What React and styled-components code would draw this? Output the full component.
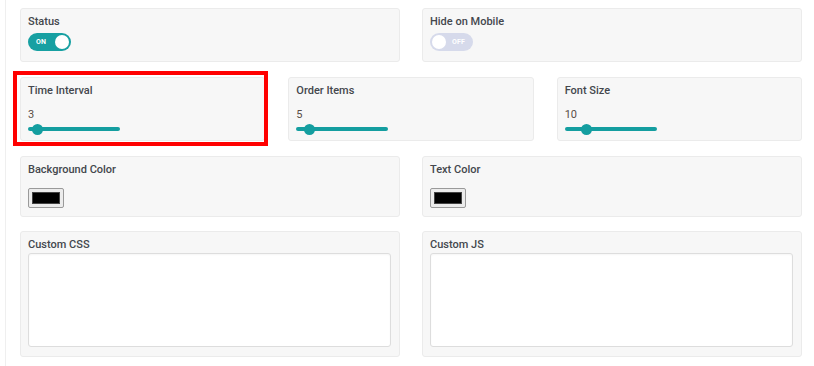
import styled, { createGlobalStyle } from 'styled-components';

const GlobalStyle = createGlobalStyle`
  body {
    margin: 0;
    background: #ffffff;
    font-family: 'Roboto', 'Liberation Sans', sans-serif;
  }
`;

const SLIDER_MAX = 50;

function Toggle({ on }) {
  return (
    <ToggleTrack $on={on}>
      <ToggleText $on={on}>{on ? 'ON' : 'OFF'}</ToggleText>
      <ToggleKnob $on={on} />
    </ToggleTrack>
  );
}

function Slider({ value }) {
  const left = 5 + (value / SLIDER_MAX) * 82;
  return (
    <SliderTrack>
      <SliderThumb style={{ left: `${left}px` }} />
    </SliderTrack>
  );
}

export default function App() {
  return (
    <>
      <GlobalStyle />
      <Page>
        <Row $cols={2}>
          <Card $pb={10}>
            <Label>Status</Label>
            <Toggle on />
          </Card>
          <Card $pb={10}>
            <Label>Hide on Mobile</Label>
            <Toggle on={false} />
          </Card>
        </Row>

        <Row $cols={3}>
          <Card $pb={6} $highlight>
            <Label>Time Interval</Label>
            <Value>3</Value>
            <Slider value={3} />
          </Card>
          <Card $pb={6}>
            <Label>Order Items</Label>
            <Value>5</Value>
            <Slider value={5} />
          </Card>
          <Card $pb={6}>
            <Label>Font Size</Label>
            <Value>10</Value>
            <Slider value={10} />
          </Card>
        </Row>

        <Row $cols={2}>
          <Card $pb={8}>
            <Label>Background Color</Label>
            <Swatch>
              <SwatchColor $color="#000000" />
            </Swatch>
          </Card>
          <Card $pb={8}>
            <Label>Text Color</Label>
            <Swatch>
              <SwatchColor $color="#000000" />
            </Swatch>
          </Card>
        </Row>

        <Row $cols={2} $tight>
          <Card $pb={9}>
            <Label>Custom CSS</Label>
            <CodeArea />
          </Card>
          <Card $pb={9}>
            <Label>Custom JS</Label>
            <CodeArea />
          </Card>
        </Row>
      </Page>
    </>
  );
}

const Page = styled.div`
  margin-left: 5px;
  border-left: 1px solid #efefef;
  padding: 8px 12px 9px 14px;
  min-height: 349px;
  display: flex;
  flex-direction: column;
  gap: 15px;
`;

const Row = styled.div`
  display: grid;
  grid-template-columns: repeat(${(p) => p.$cols}, 1fr);
  column-gap: ${(p) => (p.$cols === 3 ? '23px' : '22px')};
  margin-top: ${(p) => (p.$tight ? '-1px' : '0')};
`;

const Card = styled.div`
  position: relative;
  background: #f7f7f7;
  border: 1px solid #ebebeb;
  border-radius: 3px;
  padding: 7px 8px ${(p) => p.$pb}px 7px;
  display: flex;
  flex-direction: column;
  align-items: flex-start;

  ${(p) =>
    p.$highlight &&
    `
    &::after {
      content: '';
      position: absolute;
      left: -8px;
      top: -7px;
      right: -4px;
      bottom: -6px;
      border: 4px solid #ff0000;
      pointer-events: none;
    }
  `}
`;

const Label = styled.div`
  font-size: 11px;
  line-height: 12px;
  font-weight: 500;
  color: #44474d;
`;

const ToggleTrack = styled.div`
  position: relative;
  margin-top: 5px;
  width: 43px;
  height: 18px;
  border-radius: 9px;
  background: ${(p) => (p.$on ? '#17a0a2' : '#d6daeb')};
`;

const ToggleKnob = styled.div`
  position: absolute;
  top: 2px;
  ${(p) => (p.$on ? 'right: 2px;' : 'left: 2px;')}
  width: 14px;
  height: 14px;
  border-radius: 50%;
  background: #ffffff;
`;

const ToggleText = styled.span`
  position: absolute;
  top: 0;
  ${(p) => (p.$on ? 'left: 8px;' : 'left: 22px;')}
  line-height: 18px;
  font-size: 7px;
  font-weight: 700;
  color: #ffffff;
  letter-spacing: 0.2px;
`;

const Value = styled.div`
  margin-top: 12px;
  font-size: 11px;
  line-height: 12px;
  color: #5a4e46;
`;

const SliderTrack = styled.div`
  position: relative;
  margin-top: 3px;
  width: 92px;
  height: 10px;

  &::before {
    content: '';
    position: absolute;
    left: 0;
    right: 0;
    top: 3px;
    height: 4px;
    border-radius: 2px;
    background: #149ea0;
  }
`;

const SliderThumb = styled.div`
  position: absolute;
  top: -0.5px;
  width: 11px;
  height: 11px;
  margin-left: -5.5px;
  border-radius: 50%;
  background: #149ea0;
`;

const Swatch = styled.div`
  margin-top: 12px;
  width: 36px;
  height: 20px;
  box-sizing: border-box;
  border: 1px solid #9a9a9a;
  border-radius: 2px;
  background: #ececec;
  padding: 3px;
  display: flex;
`;

const SwatchColor = styled.div`
  flex: 1;
  background: ${(p) => p.$color};
  border: 1px solid #444;
`;

const CodeArea = styled.div`
  margin-top: 2px;
  align-self: stretch;
  height: 94px;
  box-sizing: border-box;
  background: #ffffff;
  border: 1px solid #dddddd;
  border-radius: 3px;
  box-shadow: inset 0 1px 2px rgba(0, 0, 0, 0.04);
`;
